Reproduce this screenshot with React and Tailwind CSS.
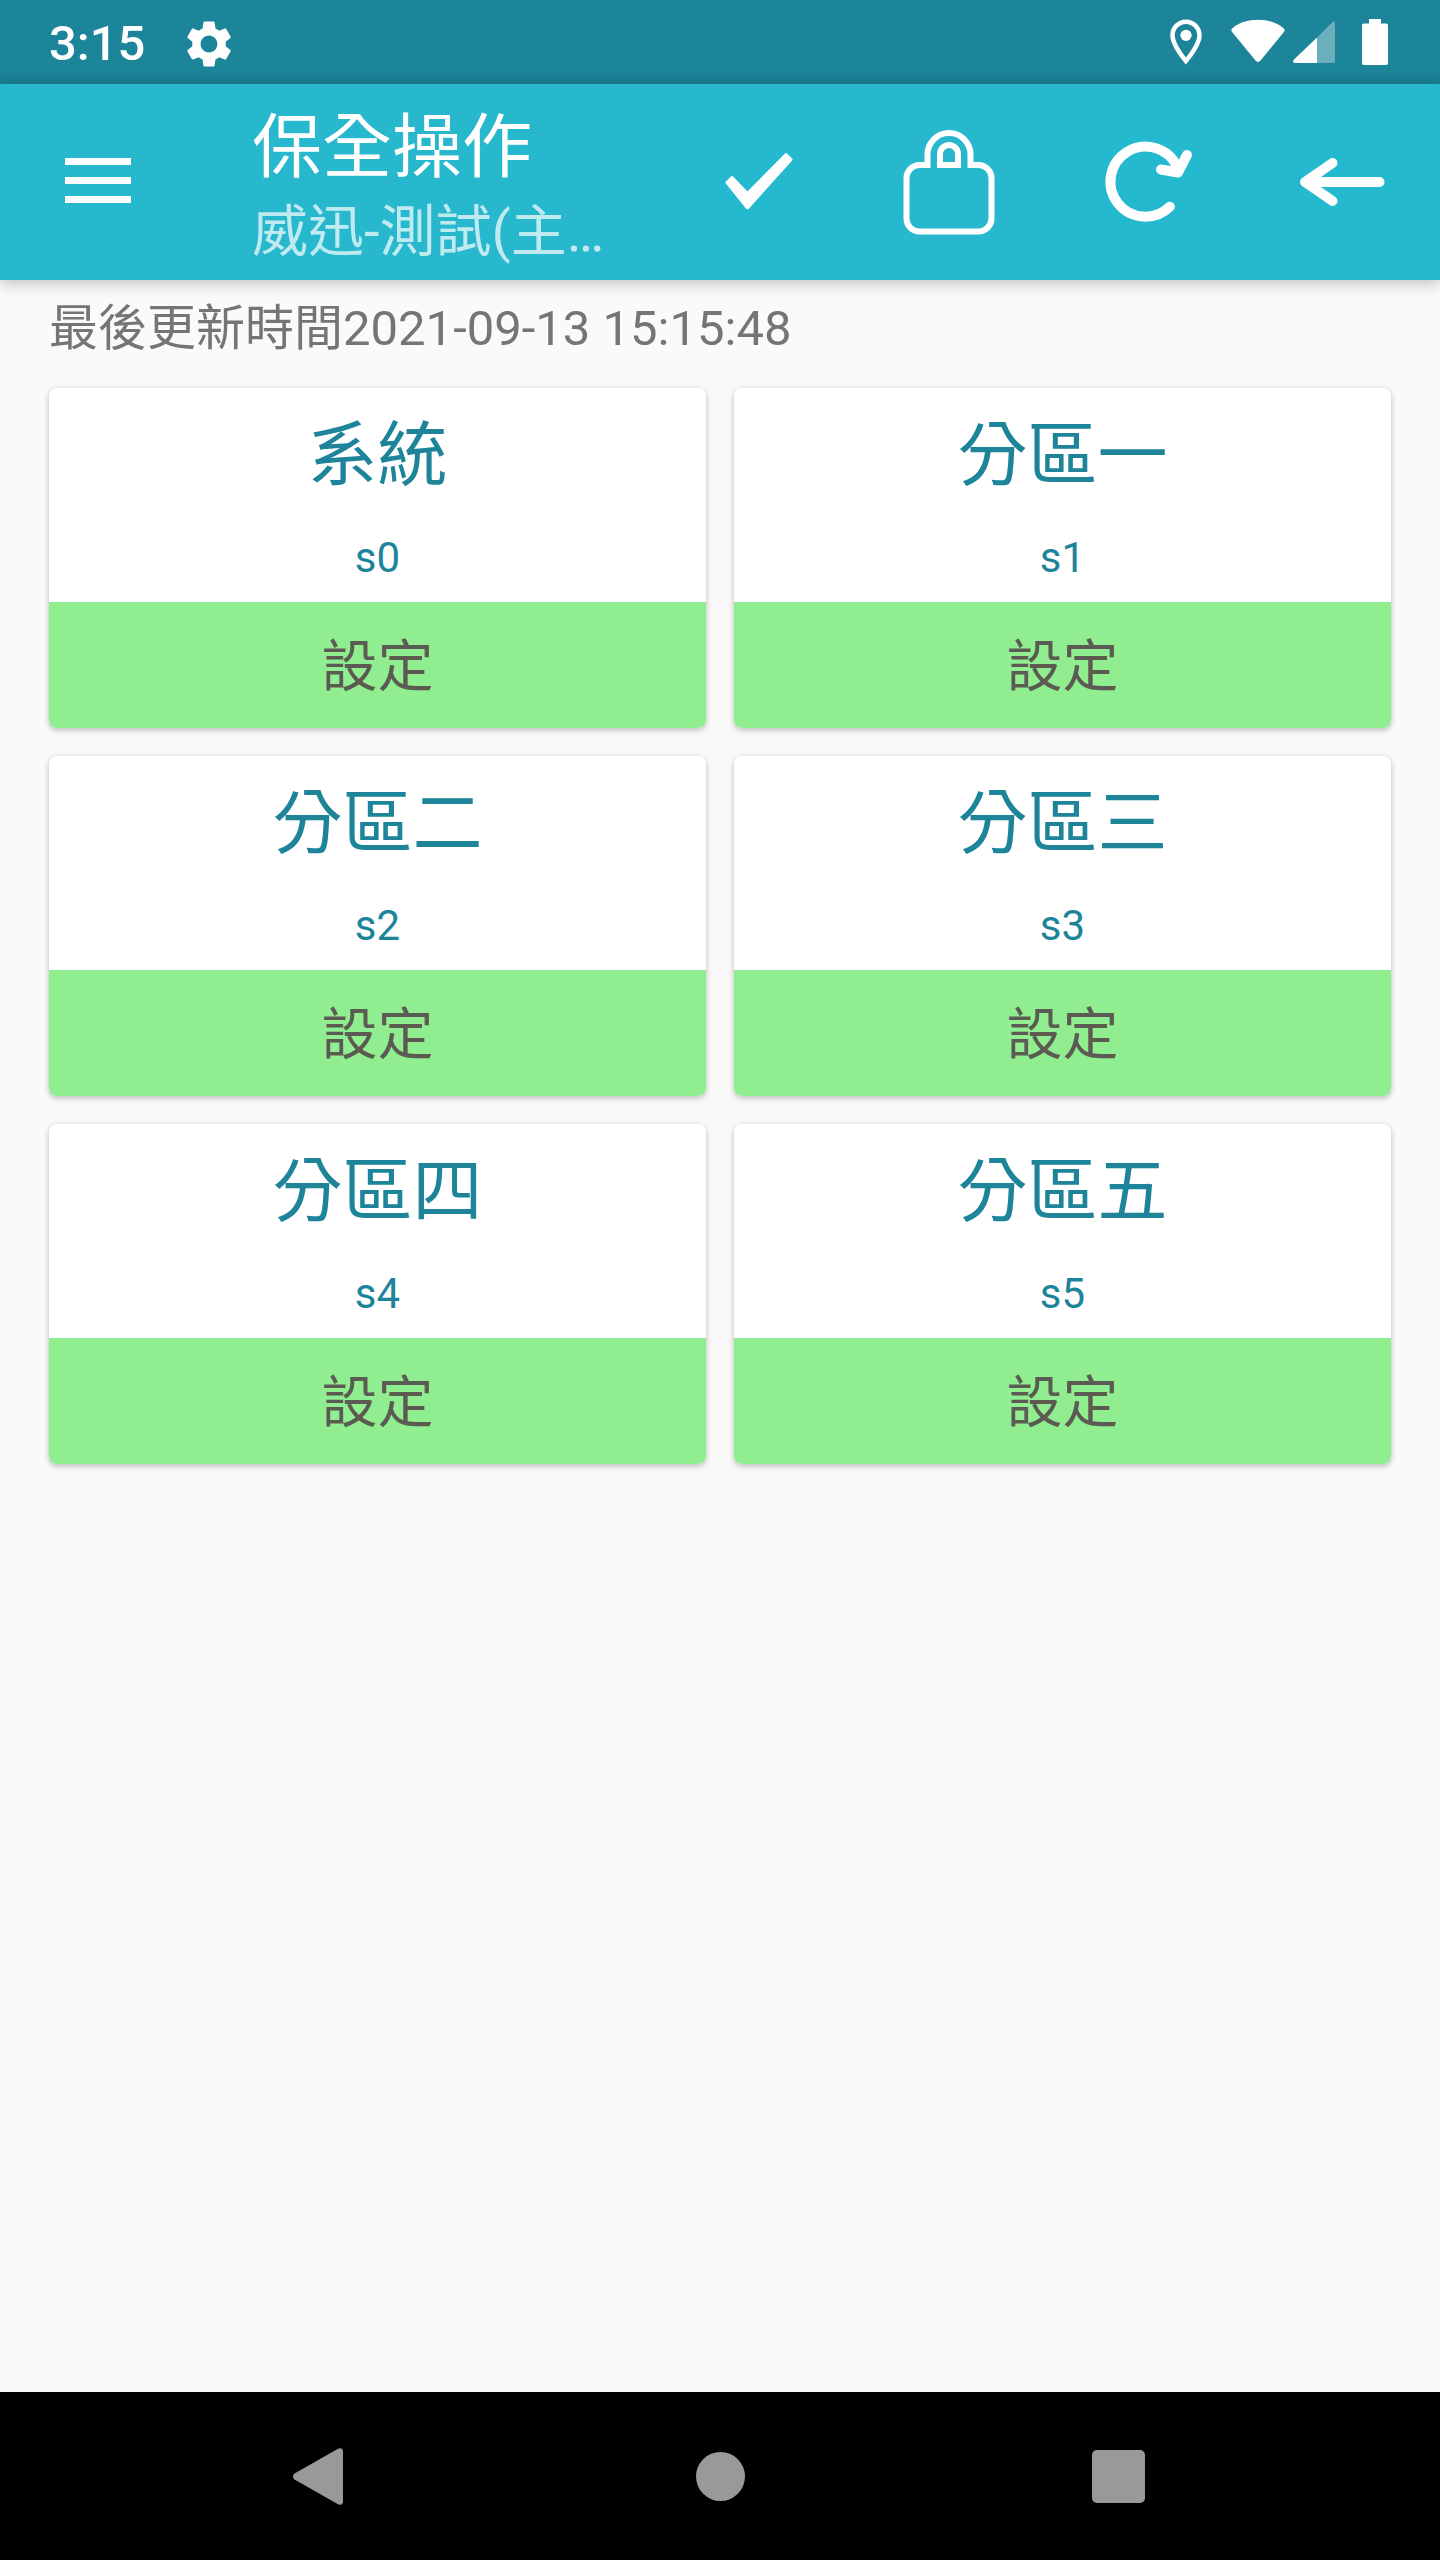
import { useState } from "react";
import { MdOutlineLocationOn, MdSettings } from "react-icons/md";

const zones = [
  { id: "s0", name: "系統" },
  { id: "s1", name: "分區一" },
  { id: "s2", name: "分區二" },
  { id: "s3", name: "分區三" },
  { id: "s4", name: "分區四" },
  { id: "s5", name: "分區五" },
];

const StatusBar = () => (
  <div className="h-[84px] shrink-0 bg-linear-to-b from-[#1c859a] from-80% to-[#1c7c91] text-white flex items-center justify-between pl-[49px] pr-[52px]">
    <div className="flex items-center gap-9 pt-1">
      <span className="text-[49px] leading-[56px] font-medium">3:15</span>
      <MdSettings className="size-14" />
    </div>
    <div className="flex items-center">
      <MdOutlineLocationOn className="size-[54px]" />
      <svg className="w-[54px] h-[46px] ml-[18px]" viewBox="0 0 54 46" fill="currentColor">
        <path d="M1.2 9.5C8 3.5 17 .8 27 .8s19 2.7 25.800 8.700c1 .9 1.100 2.200.3 3.200L29.500 41.500c-1.500 1.900-3.500 1.900-5 0L.9 12.700c-.8-1-.7-2.300.3-3.200z" />
      </svg>
      <svg className="w-[42px] h-[46px] ml-2" viewBox="0 0 42 46" fill="currentColor">
        <path opacity="0.35" d="M24 18.500 39.500 3c1-1 2.500-.5 2.500 1v38c0 1.500-.5 2-2 2H24z" />
        <path d="M24 18.500V44H2c-2 0-2.500-2-1-3.500z" />
      </svg>
      <svg className="w-[26px] h-[46px] ml-[27px]" viewBox="0 0 26 46" fill="currentColor">
        <path d="M7 0h12v4.500h5c1.300 0 2 .7 2 2V44c0 1.300-.7 2-2 2H2c-1.300 0-2-.7-2-2V6.500c0-1.300.7-2 2-2h5z" />
      </svg>
    </div>
  </div>
);

const MenuIcon = () => (
  <svg className="w-[66px] h-12" viewBox="0 0 66 48" fill="currentColor">
    <path d="M0 0h66v7H0zM0 19h66v7H0zM0 38h66v7H0z" />
  </svg>
);

const CheckIcon = () => (
  <svg className="size-28 bg-[#24b9cf]" viewBox="0 0 112 112" fill="currentColor">
    <path
      d="M29 56.500 34 51.500 49.500 67.500 88 28.500 93 33.500 49.500 82z"
      stroke="currentColor"
      strokeWidth="3"
      strokeLinejoin="round"
    />
  </svg>
);

const LockIcon = () => (
  <svg
    className="size-28"
    viewBox="0 0 112 112"
    fill="none"
    stroke="currentColor"
    strokeWidth="6"
  >
    <path d="M36 39H25.500a13 13 0 0 0-13 13v40.500a13 13 0 0 0 13 13h59a13 13 0 0 0 13-13V52a13 13 0 0 0-13-13H74" />
    <path d="M33.500 42V28.500a21.500 21.500 0 0 1 43 0V42" />
    <path d="M46 39V28a9 9 0 0 1 18 0v11z" />
  </svg>
);

const RefreshIcon = () => (
  <svg
    className="size-28 bg-[#24b9cf]"
    viewBox="0 0 112 112"
    fill="none"
    stroke="currentColor"
    strokeWidth="10"
    strokeLinecap="round"
  >
    <path d="M79.900 80.700A35 35 0 1 1 87 40.500" />
    <path d="M71 43.500 88 46.500 97 29" strokeLinejoin="round" />
  </svg>
);

const BackIcon = () => (
  <svg
    className="size-28 bg-[#24b9cf]"
    viewBox="0 0 112 112"
    fill="none"
    stroke="currentColor"
    strokeWidth="10"
    strokeLinecap="round"
    strokeLinejoin="round"
  >
    <path d="M93.500 56H20M46.500 37 19 56l27.500 19" />
  </svg>
);

const actions = [
  { label: "確認", Icon: CheckIcon },
  { label: "鎖定", Icon: LockIcon },
  { label: "重新整理", Icon: RefreshIcon },
  { label: "返回", Icon: BackIcon },
];

const Toolbar = () => (
  <header className="h-[196px] shrink-0 bg-[#28b8cd] text-white flex items-center shadow-[0_4px_14px_rgba(0,0,0,0.22)]">
    <button aria-label="選單" className="w-[196px] h-full flex items-center justify-center">
      <MenuIcon />
    </button>
    <div className="flex-1 min-w-0 pl-14 pt-4">
      <h1 className="text-[70px] leading-[84px] truncate">保全操作</h1>
      <p className="text-[56px] leading-[84px] text-white/70 truncate">威迅-測試(主…</p>
    </div>
    {actions.map(({ label, Icon }) => (
      <button
        key={label}
        aria-label={label}
        className="w-[196px] h-full shrink-0 flex items-center justify-center"
      >
        <Icon />
      </button>
    ))}
  </header>
);

const ZoneCard = ({ zone, selected, onSelect }) => (
  <section className="rounded-[8px] overflow-hidden bg-white text-center shadow-[0_2px_6px_rgba(0,0,0,0.26)]">
    <div className="h-[214px] pt-[26px] text-[#1d8499]">
      <h2 className="text-[70px] leading-[84px]">{zone.name}</h2>
      <p className="pt-8 text-[42px] leading-[56px]">{zone.id}</p>
    </div>
    <button
      aria-pressed={selected}
      onClick={() => onSelect(zone.id)}
      className="w-full h-[126px] pt-1 bg-[#90ee90] text-[#5b5b53] text-[56px] leading-[84px]"
    >
      設定
    </button>
  </section>
);

// Android navigation bar
const NavBar = () => (
  <nav className="h-[168px] shrink-0 bg-black text-[#999999] flex items-center justify-center gap-[202px]">
    <button aria-label="上一頁" className="w-[196px] h-full flex items-center justify-center">
      <svg className="w-[58px] h-[57px]" viewBox="0 0 58 57" fill="currentColor">
        <path d="M1.500 25.500 45 .8c2.500-1.300 5-.3 5 2.700v50c0 3-2.500 4-5 2.700L1.500 31.500c-2-1.500-2-4.500 0-6z" />
      </svg>
    </button>
    <button aria-label="首頁" className="w-[196px] h-full flex items-center justify-center">
      <span className="size-[49px] rounded-full bg-current"></span>
    </button>
    <button aria-label="最近使用" className="w-[196px] h-full flex items-center justify-center">
      <span className="size-[53px] rounded-[5px] bg-current"></span>
    </button>
  </nav>
);

function App() {
  const [selected, setSelected] = useState(null);

  return (
    <div
      lang="zh-Hant"
      className="min-h-screen flex flex-col bg-[#fafafa] font-['Roboto','Noto_Sans_CJK_TC',sans-serif]"
    >
      <StatusBar />
      <Toolbar />
      <main className="flex-1 px-[49px] pt-[14px] pb-7">
        <p className="text-[49px] leading-[70px] text-[#757575]">
          最後更新時間2021-09-13 15:15:48
        </p>
        <div className="grid grid-cols-2 gap-7 pt-6">
          {zones.map((zone) => (
            <ZoneCard
              key={zone.id}
              zone={zone}
              selected={selected === zone.id}
              onSelect={setSelected}
            />
          ))}
        </div>
      </main>
      <NavBar />
    </div>
  );
}

export default App;
